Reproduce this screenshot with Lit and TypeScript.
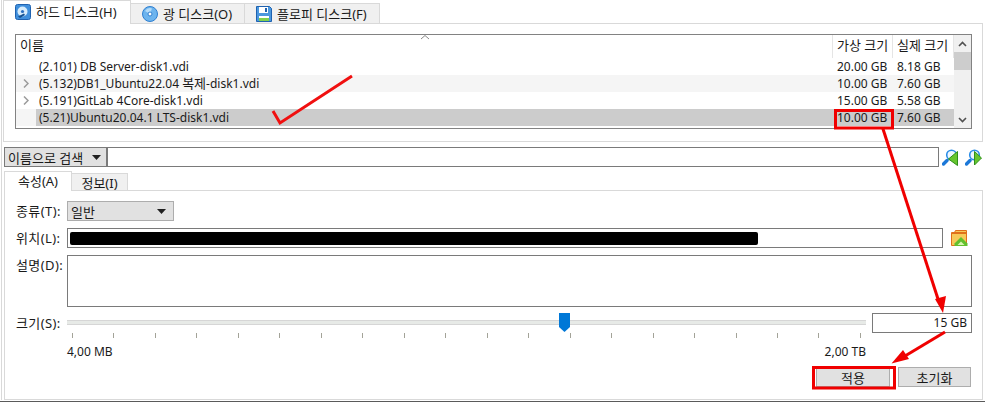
import { LitElement, html, css, svg } from "lit";
import { customElement } from "lit/decorators.js";

const rows = [
  { name: html`(2.101) DB Server-disk1.vdi`, v: "20.00 GB", r: "8.18 GB", arrow: false, cls: "" },
  { name: html`(5.132)DB1_Ubuntu22.04 <span class="ko">복제</span>-disk1.vdi`, v: "10.00 GB", r: "7.60 GB", arrow: true, cls: "alt" },
  { name: html`(5.191)GitLab 4Core-disk1.vdi`, v: "15.00 GB", r: "5.58 GB", arrow: true, cls: "" },
  { name: html`(5.21)Ubuntu20.04.1 LTS-disk1.vdi`, v: "10.00 GB", r: "7.60 GB", arrow: false, cls: "alt sel" },
];

const hddIcon = html`<svg class="ico" width="16" height="16" viewBox="0 0 16 16">
  <rect x="0.5" y="0.5" width="15" height="15" rx="2" fill="#3f8fdc" stroke="#1f62b0"/>
  <circle cx="7.5" cy="7.5" r="5" fill="#d7ecfb"/>
  <circle cx="7.5" cy="7.5" r="1.6" fill="#2a6fc0"/>
  <path d="M3 12.5 L9 9.5 L10 11 L5 14 Z" fill="#15508f"/>
</svg>`;
const cdIcon = html`<svg class="ico" width="16" height="16" viewBox="0 0 16 16">
  <circle cx="8" cy="8" r="7.5" fill="#6db4ee" stroke="#2f7fd0"/>
  <path d="M3 5 A6 6 0 0 1 10 2.4 L8 8 Z" fill="#b5dcf8"/>
  <circle cx="8" cy="8" r="2" fill="#fff" stroke="#2f7fd0"/>
</svg>`;
const floppyIcon = html`<svg class="ico" width="16" height="16" viewBox="0 0 16 16">
  <path d="M0.5 0.5 H13.5 L15.5 2.5 V15.5 H0.5 Z" fill="#4a97de" stroke="#1f62b0"/>
  <rect x="3" y="1" width="9" height="6" fill="#fff"/>
  <rect x="9" y="2" width="2" height="4" fill="#1f62b0"/>
  <rect x="3" y="10" width="10" height="5" fill="#fff"/>
  <rect x="3" y="12" width="10" height="3" fill="#7fd04f"/>
</svg>`;
const searchIcon = (next: boolean) => html`<svg class="ico" width="17" height="17" viewBox="0 0 17 17">
  <path d="M1.5 15 L5 11.5" stroke="#1c78d8" stroke-width="3.4" stroke-linecap="round"/>
  <circle cx="9.5" cy="6" r="4.8" fill="#eef7fe" stroke="#2a8de6" stroke-width="1.6"/>
  ${next
    ? svg`<path d="M9.5 2.5 L16.5 9 L9.5 16 Z" fill="#66c52e" stroke="#2f8f1a"/>`
    : svg`<path d="M15.5 2.5 L6.5 10 L15.5 16.5 Z" fill="#66c52e" stroke="#2f8f1a"/>`}
</svg>`;
const folderIcon = html`<svg class="ico" width="17" height="17" viewBox="0 0 17 17">
  <path d="M0.5 2.5 V15.5 H15.5 V0.5 H4.5 L3.5 2.5 Z" fill="#f7c95a" stroke="#e0701c"/>
  <rect x="1" y="2" width="14" height="2" fill="#e0701c"/>
  <path d="M10 7 L16.5 13.5 V16 H3.5 V13.5 Z" fill="#62c02e"/>
  <path d="M10 11.5 L13.5 15 H6.5 Z" fill="#d8f5b0"/>
</svg>`;

@customElement("app-root")
export class AppRoot extends LitElement {
  static styles = css`
    :host {
      display: block;
      position: relative;
      width: 985px;
      height: 402px;
      overflow: hidden;
      background: #fff;
      font-family: "Noto Sans", "Noto Sans CJK KR", sans-serif;
      font-size: 12px;
      color: #1a1a1a;
    }
    .ko { font-size: 13px; }
    .ico { flex: none; display: block; }
    .edge { position: absolute; left: 1px; top: 0; bottom: 2px; width: 1px; background: #d9d9d9; }
    .baseline { position: absolute; left: 0; right: 0; bottom: 0; height: 1px; background: #5a5a5a; }

    .tabs { display: flex; align-items: flex-end; }
    .top-tabs { height: 23px; padding-left: 4px; }
    .tab {
      display: flex; align-items: center; gap: 5px; box-sizing: border-box;
      height: 20px; padding: 0 7px; background: #f0f0f0;
      border: 1px solid #d9d9d9; border-bottom: none; margin-left: -1px; white-space: nowrap;
    }
    .tab.active { height: 24px; margin-bottom: -1px; background: #fff; position: relative; z-index: 1; padding-bottom: 2px; }
    .t1 { width: 128px; padding-left: 11px; }
    .t2 { width: 115px; padding-left: 11px; }
    .t3 { width: 136px; padding-left: 11px; }

    .upper {
      box-sizing: border-box; margin-left: 3px; width: 980px; height: 119px;
      border: 1px solid #d9d9d9; padding: 10px 0 0 11px;
    }
    .list {
      box-sizing: border-box; width: 957px; height: 95px; border: 1px solid #828282;
      display: grid; grid-template-columns: 1fr 17px; background: #fff;
    }
    .cols { min-width: 0; }
    .head, .row { display: grid; grid-template-columns: 1fr 60px 61px; }
    .head { height: 23px; position: relative; }
    .head > div { padding: 1px 0 0 4px; line-height: 19px; border-right: 1px solid #e5e5e5; white-space: nowrap; }
    .head > div.c { padding-left: 4px; }
    .caret { position: absolute; left: 404px; top: -1px; }
    .row { height: 17px; line-height: 17px; }
    .row.alt { background: #f5f5f5; }
    .name { display: flex; align-items: center; min-width: 0; }
    .chev { width: 20px; flex: none; display: flex; justify-content: flex-end; padding-right: 7px; box-sizing: border-box; }
    .label { flex: 1; padding-left: 3px; white-space: nowrap; line-height: 17px; }
    .row.sel .label, .row.sel .val { background: #cccccc; }
    .val { padding-left: 4px; white-space: nowrap; }
    .scroll { background: #f0f0f0; display: flex; flex-direction: column; align-items: center; position: relative; }
    .sb-btn { height: 17px; display: flex; align-items: center; justify-content: center; flex: none; background: #f0f0f0; }
    .sb-thumb { width: 100%; height: 18px; background: #cdcdcd; flex: none; }
    .sb-space { flex: 1; }

    .search { display: flex; align-items: center; margin: 5px 0 0 4px; height: 20px; }
    .combo {
      box-sizing: border-box; display: flex; align-items: center; justify-content: space-between;
      background: #e1e1e1; border: 1px solid #adadad; height: 20px; padding: 0 5px 0 3px; white-space: nowrap;
    }
    .search .combo { width: 103px; border-color: #7a7a7a; }
    .input { box-sizing: border-box; border: 1px solid #7a7a7a; background: #fff; height: 20px; }
    .search .input { width: 832px; margin-right: 3px; }
    .search .ico + .ico { margin-left: 6px; }

    .low-tabs { height: 19px; margin-top: 4px; padding-left: 5px; }
    .low-tabs .tab { height: 17px; padding: 0; justify-content: center; }
    .low-tabs .tab.active { height: 20px; padding: 0 0 3px; }
    .t4 { width: 68px; }
    .t5 { width: 57px; }

    .lower {
      box-sizing: border-box; margin-left: 4px; width: 979px; height: 210px;
      border: 1px solid #d9d9d9; padding: 10px 0 0 11px;
      display: grid; grid-template-columns: 51px 806px 100px; grid-auto-rows: min-content;
      align-items: start;
    }
    .lab { line-height: 20px; white-space: nowrap; letter-spacing: 0.4px; }
    .f-type { grid-column: 2 / 4; height: 20px; margin-bottom: 7px; }
    .f-type .combo { width: 107px; padding-left: 3px; padding-right: 7px; }
    .f-loc { grid-column: 2 / 4; display: flex; align-items: center; margin-bottom: 7px; }
    .f-loc .input { width: 876px; height: 20px; padding: 3px 0 0 2px; }
    .mask { display: block; width: 688px; height: 13px; background: #000; border-radius: 2px; }
    .f-loc .ico { margin-left: 8px; }
    .f-desc { grid-column: 2 / 4; margin-bottom: 6px; }
    .f-desc .input { width: 905px; height: 52px; }
    .slider { position: relative; height: 20px; width: 799px; }
    .track { height: 5px; background: #e7eae7; border-top: 1px solid #d6d6d6; border-bottom: 1px solid #d6d6d6; box-sizing: border-box; margin-top: 7px; }
    .thumb { position: absolute; left: 492px; top: 0; }
    .size { box-sizing: border-box; height: 20px; width: 100px; border: 1px solid #7a7a7a; text-align: right; padding-right: 4px; line-height: 18px; margin-left: -1px; }
    .ticks { grid-column: 2; display: flex; justify-content: space-between; margin: 0 6px 0 5px; height: 9px; width: 789px; }
    .tick { width: 1px; height: 5px; background: #a3a398; }
    .limits { grid-column: 2; display: flex; justify-content: space-between; width: 799px; line-height: 16px; margin-top: 2px; }
    .buttons { grid-column: 1 / 4; display: flex; justify-content: flex-end; gap: 8px; margin-top: 7px; width: 956px; }
    .btn { box-sizing: border-box; width: 74px; height: 20px; border: 1px solid #adadad; background: #e1e1e1; display: flex; align-items: center; justify-content: center; }
    .btn.wide { width: 73px; margin-right: 1px; }

    .overlay { position: absolute; left: 0; top: 0; pointer-events: none; }
  `;

  render() {
    const ticks = Array.from({ length: 20 });
    const arrowDown = html`<svg width="9" height="5" viewBox="0 0 9 5"><path d="M0 0 H9 L4.5 5 Z" fill="#202020"/></svg>`;
    return html`
      <div class="edge"></div>
      <div class="baseline"></div>
      <div class="tabs top-tabs">
        <div class="tab active t1">${hddIcon}<span class="ko">하드 디스크(H)</span></div>
        <div class="tab t2">${cdIcon}<span class="ko">광 디스크(O)</span></div>
        <div class="tab t3">${floppyIcon}<span class="ko">플로피 디스크(F)</span></div>
      </div>
      <div class="upper">
        <div class="list">
          <div class="cols">
            <div class="head">
              <div class="ko">이름</div><div class="c ko">가상 크기</div><div class="c ko">실제 크기</div>
              <svg class="caret" width="10" height="6" viewBox="0 0 10 6"><path d="M1 5 L5 1.5 L9 5" fill="none" stroke="#8a8a8a"/></svg>
            </div>
            ${rows.map(r => html`
              <div class="row ${r.cls}">
                <div class="name">
                  <span class="chev">${r.arrow ? html`<svg width="6" height="9" viewBox="0 0 6 9"><path d="M1 0.5 L5 4.5 L1 8.5" fill="none" stroke="#9a9a9a" stroke-width="1.5"/></svg>` : ""}</span>
                  <span class="label">${r.name}</span>
                </div>
                <div class="val">${r.v}</div>
                <div class="val">${r.r}</div>
              </div>`)}
          </div>
          <div class="scroll">
            <div class="sb-btn"><svg width="9" height="6" viewBox="0 0 9 6"><path d="M1 5 L4.5 1.5 L8 5" fill="none" stroke="#505050" stroke-width="1.6"/></svg></div>
            <div class="sb-thumb"></div>
            <div class="sb-space"></div>
            <div class="sb-btn"><svg width="9" height="6" viewBox="0 0 9 6"><path d="M1 1 L4.5 4.5 L8 1" fill="none" stroke="#505050" stroke-width="1.6"/></svg></div>
          </div>
        </div>
      </div>
      <div class="search">
        <div class="combo"><span class="ko">이름으로 검색</span>${arrowDown}</div>
        <div class="input"></div>
        ${searchIcon(false)}${searchIcon(true)}
      </div>
      <div class="tabs low-tabs">
        <div class="tab active t4 ko">속성(A)</div>
        <div class="tab t5 ko">정보(I)</div>
      </div>
      <div class="lower">
        <div class="lab ko">종류(T):</div>
        <div class="f-type"><div class="combo"><span class="ko">일반</span>${arrowDown}</div></div>
        <div class="lab ko">위치(L):</div>
        <div class="f-loc"><div class="input"><span class="mask"></span></div>${folderIcon}</div>
        <div class="lab ko">설명(D):</div>
        <div class="f-desc"><div class="input"></div></div>
        <div class="lab ko">크기(S):</div>
        <div class="slider">
          <div class="track"></div>
          <svg class="thumb" width="11" height="19" viewBox="0 0 11 19"><path d="M0 0 H11 V14 L5.5 19 L0 14 Z" fill="#0078d7"/></svg>
        </div>
        <div class="size">15 GB</div>
        <div class="ticks">${ticks.map(() => html`<span class="tick"></span>`)}</div>
        <div class="limits"><span>4,00 MB</span><span>2,00 TB</span></div>
        <div class="buttons">
          <div class="btn ko">적용</div>
          <div class="btn wide ko">초기화</div>
        </div>
      </div>
      <svg class="overlay" width="985" height="402" viewBox="0 0 985 402">
        <path d="M352 76 L280 123 L273 111" fill="none" stroke="#f01010" stroke-width="3"/>
        <rect x="835.5" y="110.5" width="57" height="17.5" fill="none" stroke="#f00000" stroke-width="3"/>
        <path d="M882.7 128 L938 299" stroke="#f00000" stroke-width="3"/>
        <path d="M943 313 L935 299 L946 296 Z" fill="#f00000"/>
        <path d="M945 332 L905 356" stroke="#f00000" stroke-width="3"/>
        <path d="M891.5 363.5 L903 350 L909 359 Z" fill="#f00000"/>
        <rect x="813.5" y="367.5" width="81" height="20.5" fill="none" stroke="#f00000" stroke-width="3"/>
      </svg>
    `;
  }
}
